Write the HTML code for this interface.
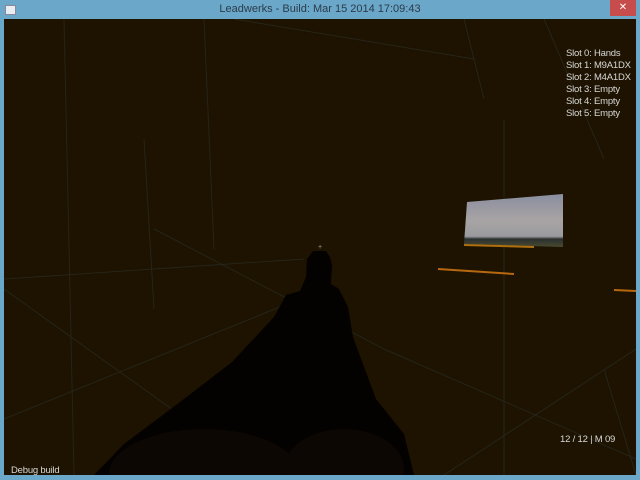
<!DOCTYPE html>
<html><head><style>
html,body{margin:0;padding:0;width:640px;height:480px;overflow:hidden;background:#6ba7c8;font-family:"Liberation Sans",sans-serif}
.title{position:absolute;left:0;top:0;width:640px;height:19px;text-align:center;font-size:11px;line-height:19px;color:#2a3b4a}
.close{position:absolute;right:4px;top:0;width:26px;height:16px;background:#c74d4d;color:#fff;font-size:10px;text-align:center;line-height:15px}
.icon{position:absolute;left:5px;top:5px;width:9px;height:8px;background:#e8eef2;border:1px solid #889}
.vp{position:absolute;left:4px;top:19px;width:632px;height:456px;background:#1d1300;overflow:hidden}
.t{position:absolute;color:#d8d8d8;font-size:9.5px;line-height:12px;white-space:pre;letter-spacing:-0.2px}
svg{display:block}
</style></head><body>
<div class="icon"></div>
<div class="title">Leadwerks - Build: Mar 15 2014 17:09:43</div>
<div class="close">✕</div>
<div class="vp">
<svg width="632" height="456" style="position:absolute;left:0;top:0">
<g stroke="#26241a" stroke-width="1" fill="none">
<line x1="60" y1="0" x2="70" y2="456"/>
<line x1="0" y1="270" x2="260" y2="456"/>
<line x1="0" y1="260" x2="300" y2="240"/>
<line x1="140" y1="120" x2="150" y2="290"/>
<line x1="200" y1="0" x2="210" y2="230"/>
<line x1="150" y1="210" x2="380" y2="330"/>
<line x1="0" y1="400" x2="320" y2="270"/>
<line x1="460" y1="0" x2="480" y2="80"/>
<line x1="500" y1="100" x2="500" y2="456"/>
<line x1="540" y1="0" x2="600" y2="140"/>
<line x1="440" y1="456" x2="632" y2="330"/>
<line x1="380" y1="330" x2="632" y2="440"/>
<line x1="600" y1="350" x2="632" y2="456"/>
<line x1="230" y1="0" x2="470" y2="40"/>
</g>
<line x1="434" y1="250" x2="510" y2="255" stroke="#b86810" stroke-width="2"/>
<line x1="610" y1="271" x2="632" y2="272" stroke="#b86810" stroke-width="2"/>
<defs><linearGradient id="sk" x1="0" y1="0" x2="0" y2="1">
<stop offset="0" stop-color="#8a8ea0"/><stop offset="0.5" stop-color="#a8a4a4"/><stop offset="0.8" stop-color="#9a9a9e"/><stop offset="0.85" stop-color="#2a3030"/><stop offset="1" stop-color="#4a4a30"/></linearGradient></defs>
<polygon points="463,183 559,175 559,228 460,225" fill="url(#sk)"/>
<line x1="460" y1="226" x2="530" y2="228" stroke="#b07010" stroke-width="2"/>
<path d="M309,232 L322,232 L326,238 L328,246 L327,265 L335,270 L344,288 L349,318 L372,380 L400,415 L410,456 L90,456 L120,425 L180,380 L228,343 L270,298 L282,276 L296,272 L302,258 L303,240 Z" fill="#040200"/>
<ellipse cx="200" cy="455" rx="95" ry="45" fill="#0c0703"/>
<ellipse cx="340" cy="450" rx="60" ry="40" fill="#0c0703"/>
<text x="314" y="230" fill="#999" font-size="7">+</text>
</svg>
<div class="t" style="left:562px;top:29px">Slot 0: Hands
Slot 1: M9A1DX
Slot 2: M4A1DX
Slot 3: Empty
Slot 4: Empty
Slot 5: Empty</div>
<div class="t" style="left:556px;top:415px">12 / 12 | M 09</div>
<div class="t" style="left:7px;top:446px">Debug build</div>
</div>
</body></html>
